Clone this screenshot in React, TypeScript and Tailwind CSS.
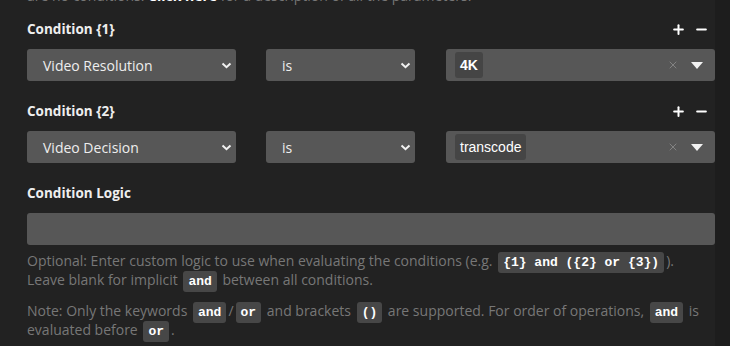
import { Plus, Minus, X } from 'lucide-react';

const conditions = [
  { id: 1, param: 'Video Resolution', op: 'is', value: '4K', bold: true },
  { id: 2, param: 'Video Decision', op: 'is', value: 'transcode', bold: false },
];

const Chevron = () => (
  <svg width="11" height="7" viewBox="0 0 11 7" className="shrink-0">
    <path d="M1.5 1.5 L5.5 5.2 L9.5 1.5" fill="none" stroke="#f2f2f2" strokeWidth="2" />
  </svg>
);

const Select = ({ label, width }: { label: string; width: string }) => (
  <div className={`${width} h-[32px] bg-[#575757] rounded-[3px] flex items-center justify-between pl-[16px] pr-[4px] text-[14px] text-[#eeeeee]`}>
    <span>{label}</span>
    <Chevron />
  </div>
);

const Code = ({ children }: { children: string }) => (
  <code
    className="bg-[#474747] text-white font-bold rounded-[3px] px-[5px] py-[3px] text-[13px] leading-none mx-[2px]"
    style={{ fontFamily: '"Liberation Mono", monospace' }}
  >
    {children}
  </code>
);

const ConditionRow = ({ id, param, op, value, bold }: typeof conditions[number]) => (
  <div>
    <div className="flex items-center justify-between h-[20px] pr-[6px]">
      <h4 className="font-bold text-[13.5px] text-[#eeeeee]">Condition {`{${id}}`}</h4>
      <div className="flex items-center gap-[8px] text-white">
        <Plus size={15} strokeWidth={3.2} />
        <Minus size={15} strokeWidth={3.2} />
      </div>
    </div>
    <div className="flex mt-[10px] gap-[30px]">
      <Select label={param} width="w-[209px]" />
      <Select label={op} width="w-[149px]" />
      <div className="w-[269px] h-[32px] bg-[#575757] rounded-[3px] flex items-center pl-[9px] pr-[12px] ml-[1px]">
        <span
          className={`bg-[#454545] text-white rounded-[3px] px-[5px] h-[26px] flex items-center text-[14px] ${bold ? 'font-semibold' : ''}`}
          style={{ fontFamily: '"Liberation Sans", Arial, sans-serif' }}
        >
          {value}
        </span>
        <div className="flex-1" />
        <X size={12} strokeWidth={1.3} className="text-[#9a9a9a] mr-[12px]" />
        <svg width="12" height="7" viewBox="0 0 12 7">
          <path d="M0 0 H12 L6 7 Z" fill="#f2f2f2" />
        </svg>
      </div>
    </div>
  </div>
);

export default function App() {
  return (
    <div
      className="w-[730px] h-[346px] overflow-hidden bg-[#222222] flex"
      style={{ fontFamily: '"Open Sans", sans-serif' }}
    >
      <div className="w-[715px] pl-[27px]">
        <p className="text-[14px] leading-[19px] text-[#777777] -mt-[14px] mb-[14px] whitespace-nowrap">
          are no conditions. <span className="font-bold text-white">Click here</span> for a description of all the parameters.
        </p>

        <div className="flex flex-col gap-[20px]">
          {conditions.map((c) => (
            <ConditionRow key={c.id} {...c} />
          ))}
        </div>

        <h4 className="mt-[20px] h-[20px] flex items-center font-bold text-[13.5px] text-[#eeeeee]">Condition Logic</h4>
        <div className="mt-[10px] h-[32px] w-[688px] bg-[#575757] rounded-[3px]" />

        <div className="text-[14px] leading-[19px] text-[#777777] pr-[10px]">
          <p className="mt-[6px]">
            Optional: Enter custom logic to use when evaluating the conditions (e.g. <Code>{'{1} and ({2} or {3})'}</Code>).
            <br />
            Leave blank for implicit <Code>and</Code> between all conditions.
          </p>
          <p className="mt-[12px]">
            Note: Only the keywords <Code>and</Code>/<Code>or</Code> and brackets <Code>()</Code> are supported. For order of operations, <Code>and</Code> is evaluated before <Code>or</Code>.
          </p>
        </div>
      </div>
      <div className="flex-1 bg-[#1d1d1d]" />
    </div>
  );
}
